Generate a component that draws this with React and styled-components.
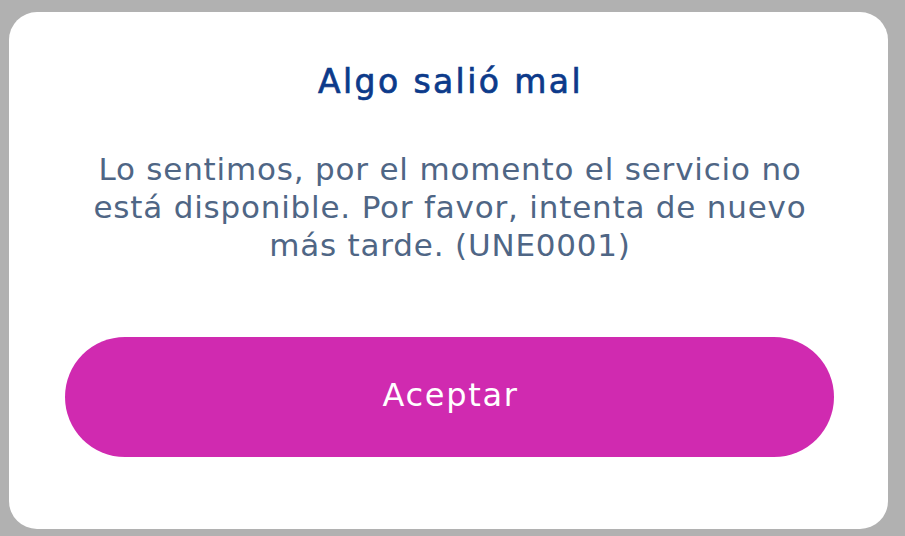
import React from "react";
import styled, { createGlobalStyle } from "styled-components";

const Global = createGlobalStyle`
  html, body { margin: 0; padding: 0; background: #b1b1b1; }
  body { font-family: "DejaVu Sans", "Liberation Sans", sans-serif; }
  * { box-sizing: border-box; }
`;

const Page = styled.div`
  width: 905px;
  height: 536px;
  padding: 12px 17px 7px 9px;
  display: flex;
`;

const Card = styled.div`
  flex: 1;
  background: #ffffff;
  border-radius: 28px;
  display: flex;
  flex-direction: column;
  align-items: center;
  padding: 0 54px 72px 56px;
`;

const Title = styled.h1`
  margin: 50px 0 0;
  padding-left: 2px;
  font-size: 33px;
  line-height: 40px;
  font-weight: 400;
  letter-spacing: 2.4px;
  -webkit-text-stroke: 0.7px #0c3a8a;
  color: #0c3a8a;
  text-align: center;
  white-space: nowrap;
`;

const Message = styled.p`
  margin: 48px 0 0;
  padding-left: 1px;
  font-size: 31px;
  line-height: 38px;
  font-weight: 400;
  letter-spacing: 0.8px;
  color: #4f6685;
  text-align: center;
  white-space: nowrap;
`;

const Button = styled.button`
  margin-top: auto;
  width: 100%;
  height: 120px;
  border: none;
  border-radius: 60px;
  background: #d02ab0;
  color: #ffffff;
  font-family: inherit;
  font-size: 32px;
  font-weight: 400;
  letter-spacing: 1.7px;
  padding: 0 0 4px 2px;
  display: flex;
  align-items: center;
  justify-content: center;
  cursor: pointer;
`;

export default function App() {
  return (
    <>
      <Global />
      <Page>
        <Card>
          <Title>Algo salió mal</Title>
          <Message>
            Lo sentimos, por el momento el servicio no
            <br />
            está disponible. Por favor, intenta de nuevo
            <br />
            más tarde. (UNE0001)
          </Message>
          <Button>Aceptar</Button>
        </Card>
      </Page>
    </>
  );
}
